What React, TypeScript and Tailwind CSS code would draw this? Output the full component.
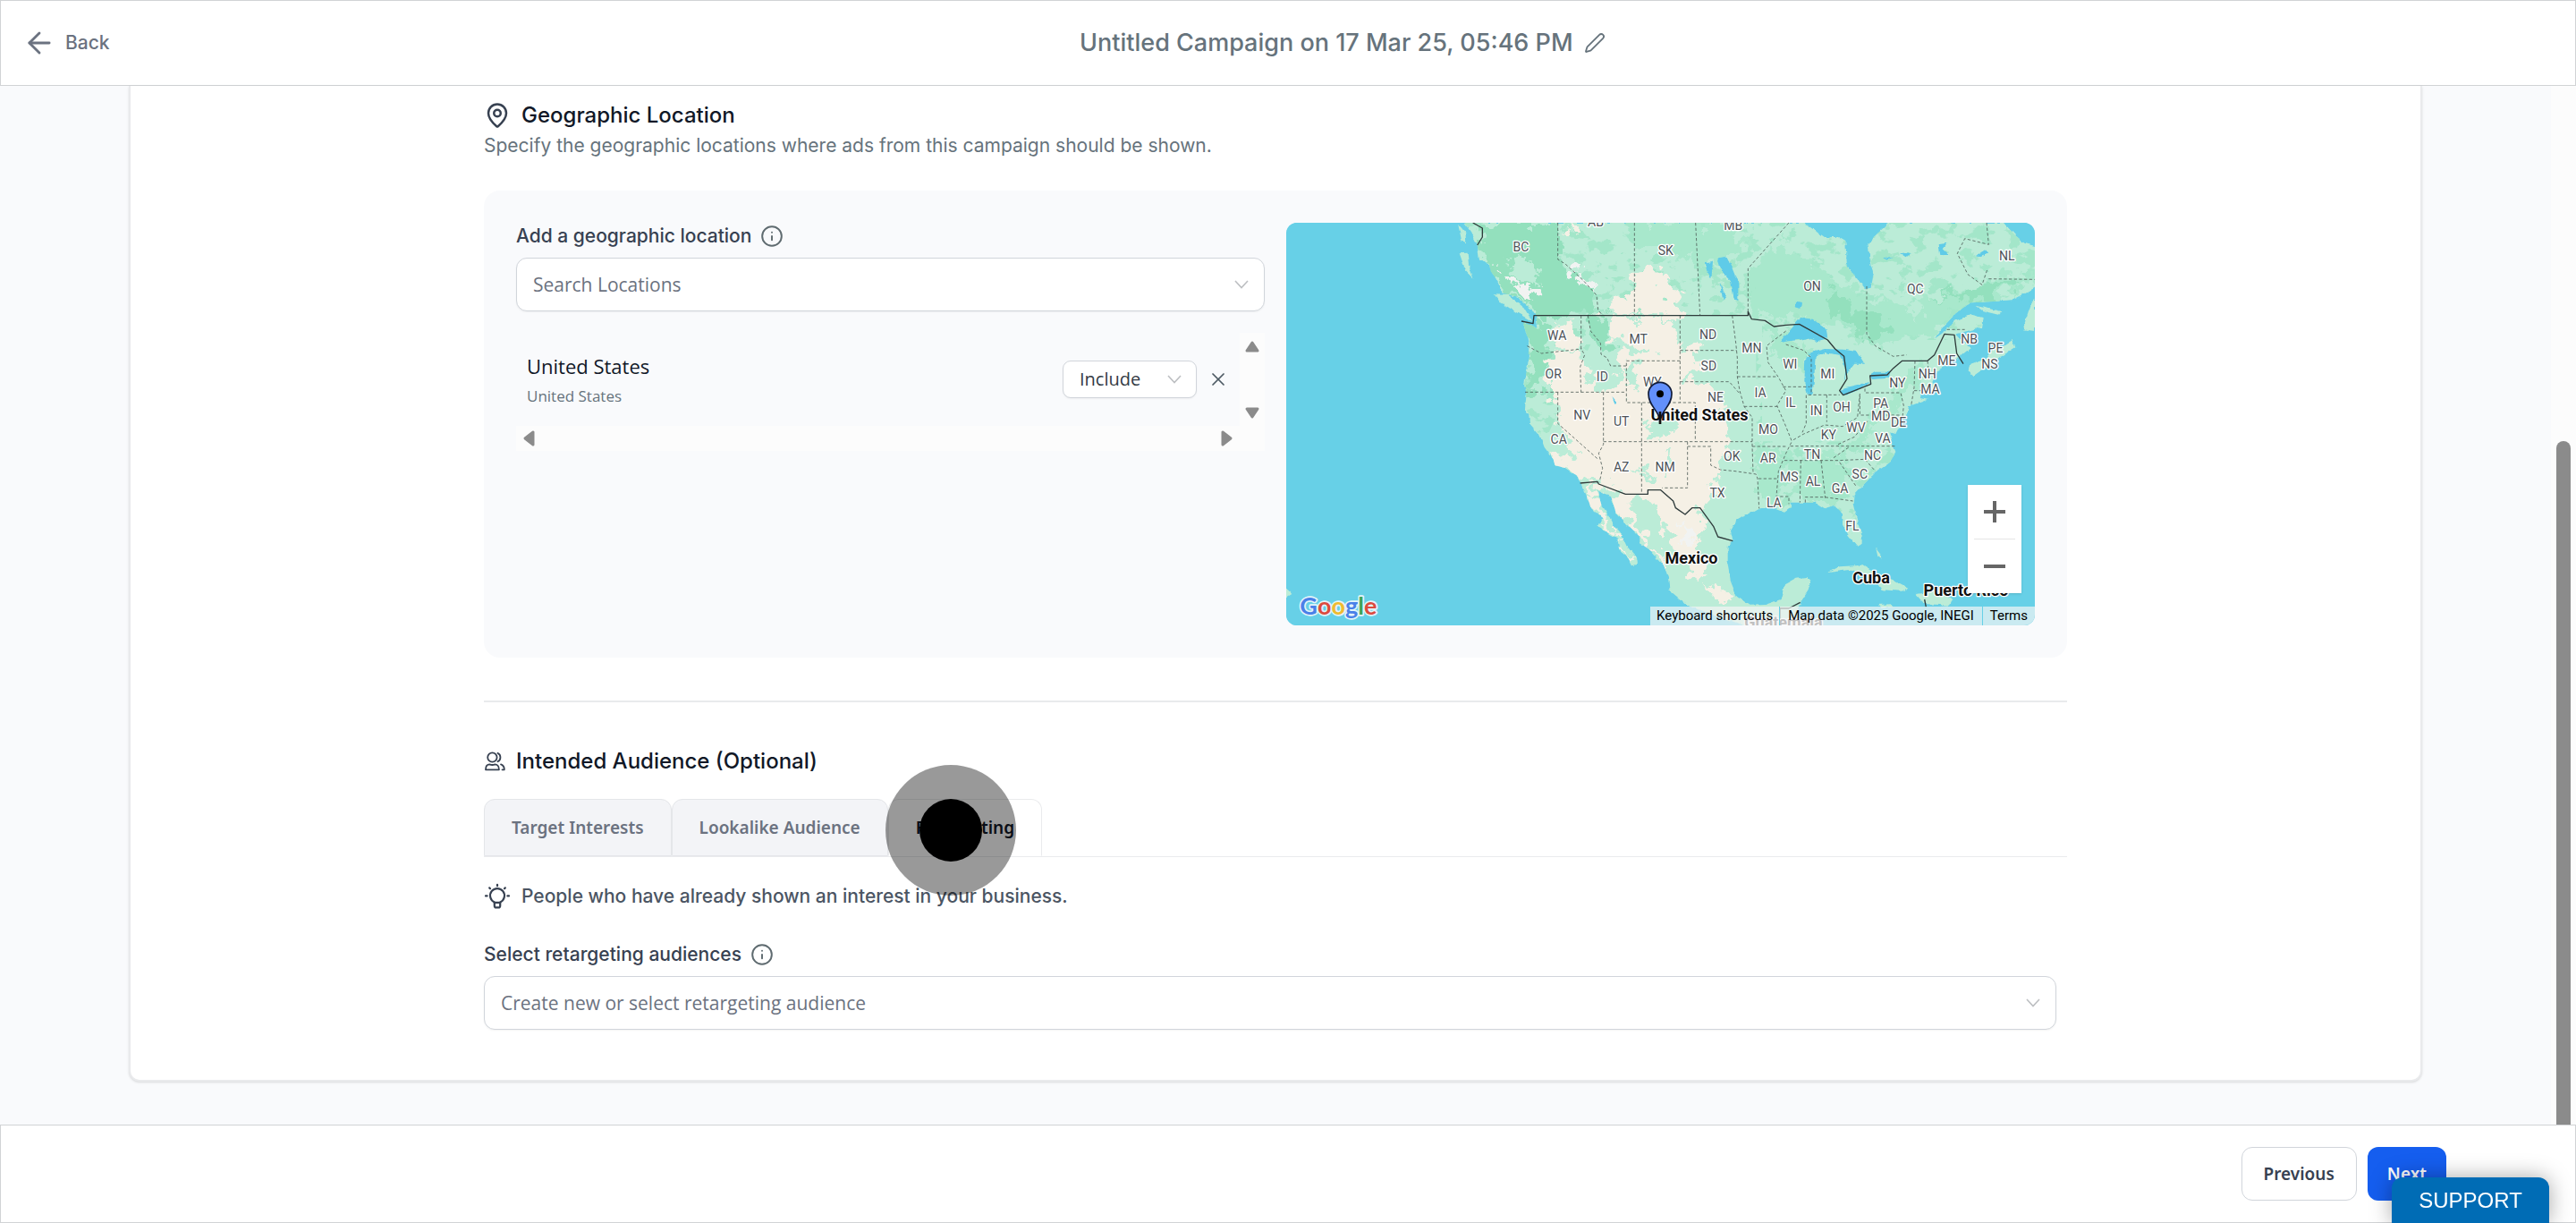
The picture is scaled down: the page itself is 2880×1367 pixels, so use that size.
import React from 'react'
import { ArrowLeft, Info, MapPin, X } from 'lucide-react'

const LAND =
  'M620 27L645 60 665 100 672 152 705 165 710 190 735 225 745 262 800 275 850 320 862 340 868 385 850 372 818 362 830 400 838 440 835 500 822 570 830 600 825 650 838 670 840 700 875 740 890 780 920 820 925 840 960 850 1000 875 1015 905 1035 950 1045 980 1090 1020 1066 1042 1110 1070 1135 1085 1140 1120 1165 1140 1185 1177 1203 1172 1200 1150 1165 1110 1150 1075 1120 1040 1100 1000 1080 970 1068 925 1090 935 1113 942 1130 1000 1170 1040 1210 1080 1210 1100 1245 1125 1290 1175 1305 1215 1310 1260 1370 1310 1440 1335 1560 1377H1730L1740 1320 1752 1295 1775 1260 1786 1222 1770 1215 1730 1220 1695 1240 1682 1290 1630 1308 1580 1310 1535 1280 1515 1230 1505 1170 1505 1110 1522 1095 1515 1060 1535 1025 1570 1005 1605 985 1660 985 1695 998 1720 980 1710 965 1760 965 1800 965 1830 985 1860 975 1890 1000 1892 1040 1910 1075 1940 1112 1955 1105 1955 1075 1940 1030 1925 970 1928 940 1960 905 2000 865 2050 830 2068 795 2060 775 2050 730 2068 735 2085 700 2110 665 2115 643 2175 620 2150 615 2165 590 2185 600 2213 590 2190 560 2210 520 2260 490 2290 470 2318 448 2300 430 2270 400 2355 378 2360 345 2320 335 2270 355 2235 390 2200 415 2215 390 2270 330 2320 295 2410 290 2460 285 2535 245V105L2500 95 2470 70 2430 27H2045L2000 70 1975 95 1982 150 1995 190 1985 245 1965 250 1940 215 1905 175 1900 90 1875 75 1830 75 1760 27Z'

const ISLANDS = [
  'M600 30L625 60 628 95 612 85Z',
  'M605 130L632 128 636 170 652 212 625 185Z',
  'M722 268L770 270 820 310 850 358 800 330 740 292Z',
  'M2535 285L2522 300 2495 385 2535 390Z',
  'M2335 305L2425 325 2415 335 2360 322Z',
  'M2320 500L2375 480 2400 445 2430 440 2460 420 2470 445 2400 490 2330 540 2315 525Z',
  'M1840 1200L1880 1180 1955 1175 2005 1205 2060 1225 2110 1250 2090 1262 2025 1258 1995 1220 1920 1190Z',
  'M2135 1272L2210 1262 2260 1290 2250 1310 2165 1305Z',
  'M2002 1120L2018 1140 2020 1155 2008 1145Z',
  'M2010 1305L2050 1303 2060 1312 2020 1316Z',
  'M24 1255L40 1272 24 1282Z',
]

const DARK_GREEN = [
  'M660 27H935L940 150 1060 270 1080 338H860L800 280 735 225 700 160Z',
  'M822 365L900 345 905 450 880 590H830L838 500Z',
  'M1036 340L1090 345 1125 440 1080 470 1040 400Z',
  'M722 268L770 270 820 310 850 358 800 330Z',
  'M1840 240L1960 330 2050 380 1990 440 1920 370 1850 340Z',
  'M2200 280L2360 240 2470 210 2480 230 2350 280Z',
]

const MID_GREEN = [
  'M1192 27H1500L1570 100 1450 170 1300 120 1200 110Z',
  'M1575 180L1690 90 1770 150 1900 240 2000 280 2100 300 2150 400 2080 420 1990 440 1900 380 1740 340 1640 350 1580 320Z',
  'M1140 600L1180 610 1160 700 1130 750 1100 750 1150 690Z',
  'M1900 770L1990 690 2130 510 2180 500 2130 590 2050 660 1960 780 1880 830 1830 810Z',
  'M1590 780L1680 780 1690 960 1620 960Z',
  'M1700 820H1850L1900 900 1850 960 1750 960Z',
  'M2150 290L2330 250 2450 190 2530 200 2420 280 2260 320 2190 410 2130 400Z',
  'M1640 340L1720 420 1780 440 1740 520 1660 470Z',
]

const DRY = [
  'M1195 195L1260 165 1275 225 1330 250 1355 300 1340 337H1095L1108 285 1140 270 1195 255Z',
  'M1110 345H1310L1345 400 1350 455 1415 458 1410 510 1350 545 1355 562 1450 565 1488 620 1508 720 1495 800 1478 860 1450 930 1400 990 1420 1060 1400 1120 1430 1210 1395 1230 1370 1160 1320 1110 1290 1175 1245 1125 1210 1090 1130 1000 1113 942 1162 937 1075 905 1010 900 980 860 925 835 905 790 1000 820 970 760 940 700 915 620 930 570 895 540 895 480 960 460 1020 452 1040 560 1110 600 1165 520 1130 490 1160 440 1120 400Z',
  'M935 365L990 385 1010 450 925 452 905 430Z',
  'M1015 905L1035 950 1045 980 1090 1020 1066 1042 1110 1070 1135 1085 1140 1120 1165 1140 1185 1177 1203 1172 1150 1100 1090 1000 1060 925Z',
  'M960 35L1020 30 1015 70 975 65Z',
  'M1440 1250L1500 1260 1510 1295 1470 1300Z',
]

const GREEN_ON_DRY = [
  'M1232 690L1262 665 1310 650 1325 690 1310 745 1240 755Z',
  'M1185 960L1240 955 1285 1040 1320 1120 1300 1160 1230 1090 1200 1030Z',
  'M1180 850L1250 870 1240 885 1190 870Z',
  'M1130 430L1200 440 1260 455 1180 470Z',
  'M1170 495L1200 500 1190 560 1170 590Z',
  'M770 160L830 145 870 190 860 235 790 215Z',
  'M1290 790L1310 800 1300 890 1290 870Z',
]

const LAKES = [
  'M1680 430L1720 380 1750 345 1790 350 1835 385 1840 415 1800 425 1770 415 1740 420 1700 425Z',
  'M1765 480L1800 465 1798 490 1795 545 1790 600 1772 602 1762 560Z',
  'M1775 465L1830 450 1895 452 1940 460 1965 500 1930 500 1905 530 1895 560 1900 520 1880 470 1830 462 1790 485Z',
  'M1880 590L1900 580 1985 560 1950 585 1895 607Z',
  'M1980 540L2000 527 2050 527 2045 548 1990 552Z',
  'M1470 145L1500 140 1520 180 1540 230 1540 285 1525 280 1515 220 1485 190Z',
  'M1430 160L1455 155 1450 215 1440 200Z',
  'M1478 230L1500 270 1490 290Z',
  'M1735 290L1755 295 1750 318 1730 312Z',
  'M1117 612L1134 632 1126 635Z',
  'M2210 100L2240 95 2225 115 2245 135 2215 135Z',
  'M2335 140L2370 115 2380 130 2345 145Z',
  'M2025 145L2060 140 2040 152Z',
  'M2085 132L2120 130 2105 145Z',
]

const SNOW = [
  'M775 215L800 225 850 250 858 290 820 280 790 255Z',
  'M985 180L1010 190 1060 240 1070 275 1040 250 1000 225Z',
  'M735 175L752 178 748 190 738 188Z',
  'M870 225L885 250 880 250Z',
  'M1355 1040L1385 1060 1395 1110 1370 1100 1345 1085Z',
]

const PROVINCES =
  'M935 27V150L960 165 1020 220 1065 270 1070 320 1085 337M1192 27V337M1397 27L1412 337M1573 325V180L1710 27M1971 240V400L2000 440 2060 475 2105 470M2373 27L2380 100 2300 80 2275 130 2310 200 2358 235 2375 185M2380 215L2535 217M832 440L880 465 970 455 1015 450M1013 338V450L1025 470 1010 510 1013 595M1036 338L1045 390 1078 430 1080 468 1100 480 1112 507H1165M1345 490H1165V630H1396V761M825 595H1165M935 595V700L1070 820M1088 595V770L1072 800 1085 850 1075 895M1216 630V937M1088 761H1587M1345 338V630M1370 761V916H1285M1370 777H1448V840L1480 855 1530 860 1600 870 1605 885 1610 985M1345 455H1535M1520 338L1532 430 1537 480V543L1545 590 1560 643 1587 680V778L1590 865M1345 560H1510L1545 600M1537 543H1672M1560 643H1672M1587 777H1700M1608 885H1675M1700 390L1635 440 1640 495 1675 545 1700 590 1670 640 1700 710 1720 760 1700 800 1675 860 1668 945H1710V970M1690 577H1780M1768 605V700L1755 730M1775 604H1880M1837 604V695M1725 755L1760 735 1830 705 1890 710 1940 680 1948 600V672H2085M1965 583V597H2085L2095 640 2090 690M1715 776H2065M1695 824H1875L1965 820 2000 860M1750 824L1747 965M1818 824L1832 950M1765 965V947H1830L1925 960M1880 830L1935 910M1860 815L1915 777M1875 770L1930 745 1975 690M2133 490L2130 580 2120 640M2175 490L2180 540M2130 590H2165M1700 435L1760 455 1785 480V600M2240 385H2300'

const BORDERS =
  'M650 27L682 45V75L665 102M813 357L852 365 855 338H1573V325L1585 350 1630 355 1660 375 1700 370 1745 367 1840 420 1865 450 1895 475 1905 550 1880 590 1892 605 1985 568 1982 540 2040 537 2060 515 2090 490H2175L2198 470 2232 400 2265 403 2273 465 2295 500M1010 900L1068 895 1072 903 1162 937H1237V923H1280L1322 960 1330 983 1362 1005 1385 983H1412L1457 1045 1472 1080 1522 1094M1680 1377V1320H1710L1748 1300M2165 1290L2170 1315'

const STATES: [string, number, number][] = [
  ['BC', 811, 109], ['AB', 1062, 25], ['SK', 1297, 120], ['MB', 1523, 37], ['ON', 1788, 239],
  ['QC', 2134, 248], ['NL', 2441, 138], ['WA', 932, 405], ['MT', 1205, 418], ['ND', 1439, 401],
  ['MN', 1585, 446], ['SD', 1441, 507], ['WI', 1714, 500], ['MI', 1840, 534], ['OR', 920, 534],
  ['ID', 1084, 543], ['WY', 1252, 560], ['NE', 1464, 612], ['IA', 1614, 598], ['IL', 1716, 630],
  ['IN', 1802, 658], ['OH', 1887, 644], ['PA', 2018, 634], ['NY', 2074, 563], ['NH', 2174, 533],
  ['MA', 2184, 584], ['ME', 2239, 488], ['NB', 2315, 418], ['PE', 2403, 446], ['NS', 2383, 500],
  ['MD', 2018, 676], ['DE', 2078, 696], ['WV', 1935, 713], ['VA', 2025, 749], ['KY', 1843, 738],
  ['MO', 1641, 721], ['NV', 1016, 671], ['UT', 1148, 694], ['CA', 938, 754], ['AZ', 1148, 847],
  ['NM', 1295, 847], ['OK', 1519, 809], ['AR', 1640, 815], ['TN', 1788, 804], ['NC', 1991, 806],
  ['SC', 1948, 869], ['MS', 1711, 878], ['AL', 1791, 894], ['GA', 1881, 917], ['TX', 1470, 932],
  ['LA', 1660, 966], ['FL', 1923, 1043],
]

const COUNTRIES: [string, number, number][] = [
  ['United States', 1410, 672],
  ['Mexico', 1383, 1151],
  ['Cuba', 1986, 1217],
  ['Puerto Rico', 2304, 1261],
]

function MapDrawing() {
  return (
    <svg
      className="absolute inset-0 h-full w-full"
      viewBox="24 27 2511 1350"
      preserveAspectRatio="xMidYMid slice"
    >
      <defs>
        <clipPath id="land">
          <path d={LAND} />
        </clipPath>
        <filter id="coast" x="0" y="0" width="1" height="1">
          <feTurbulence type="fractalNoise" baseFrequency="0.04" numOctaves="3" seed="3" />
          <feDisplacementMap in="SourceGraphic" scale="14" xChannelSelector="R" yChannelSelector="G" />
        </filter>
        <filter id="rough" x="-0.1" y="-0.1" width="1.2" height="1.2">
          <feTurbulence type="fractalNoise" baseFrequency="0.022" numOctaves="4" seed="8" />
          <feDisplacementMap in="SourceGraphic" scale="110" xChannelSelector="R" yChannelSelector="G" />
        </filter>
        <filter id="speckle" x="0" y="0" width="1" height="1" colorInterpolationFilters="sRGB">
          <feTurbulence type="fractalNoise" baseFrequency="0.018 0.024" numOctaves="5" seed="11" />
          <feColorMatrix values="0 0 0 0 0.64  0 0 0 0 0.9  0 0 0 0 0.79  20 0 0 0 -11.2" />
          <feComposite in2="SourceGraphic" operator="in" />
        </filter>
      </defs>
      <rect x="0" y="0" width="2600" height="1400" fill="#67d0e7" />
      <g fill="#bbecd7" filter="url(#coast)">
        <path d={LAND} />
        {ISLANDS.map((d) => (
          <path key={d} d={d} />
        ))}
      </g>
      <g clipPath="url(#land)">
        <path d="M600 27H2535V420H1600V760H2150L1900 1100H1620V340H1090L900 740H800V300Z" filter="url(#speckle)" />
        <g filter="url(#rough)">
          <g fill="#a8e8cc">
            {MID_GREEN.map((d) => (
              <path key={d} d={d} />
            ))}
          </g>
          <g fill="#93e0bd">
            {DARK_GREEN.map((d) => (
              <path key={d} d={d} />
            ))}
          </g>
          <g fill="#f5f0e5">
            {DRY.map((d) => (
              <path key={d} d={d} />
            ))}
          </g>
          <g fill="#bbecd7">
            {GREEN_ON_DRY.map((d) => (
              <path key={d} d={d} />
            ))}
          </g>
          <g fill="#f1f3f2">
            {SNOW.map((d) => (
              <path key={d} d={d} />
            ))}
          </g>
        </g>
      </g>
      <g fill="#5ecbe8" filter="url(#coast)">
        {LAKES.map((d) => (
          <path key={d} d={d} />
        ))}
      </g>
      <path d={PROVINCES} fill="none" stroke="#4c5a55" strokeWidth="3" strokeDasharray="10 7" opacity="0.8" />
      <path d={BORDERS} fill="none" stroke="#2f3b3b" strokeWidth="4" strokeLinejoin="round" />
      <g
        className="font-[Roboto]"
        fontSize="42"
        fill="#4d5257"
        stroke="#fff"
        strokeWidth="8"
        strokeLinejoin="round"
        paintOrder="stroke"
        textAnchor="middle"
      >
        {STATES.map(([name, x, y]) => (
          <text key={name} x={x} y={y + 15}>
            {name}
          </text>
        ))}
      </g>
      <g
        className="font-[Roboto] font-bold"
        fontSize="54"
        fill="#111"
        stroke="#fff"
        strokeWidth="8"
        strokeLinejoin="round"
        paintOrder="stroke"
        textAnchor="middle"
      >
        {COUNTRIES.map(([name, x, y]) => (
          <text key={name} x={x} y={y + 18}>
            {name}
          </text>
        ))}
        <text x="1692" y="1386" fill="#444">
          Guatemala
        </text>
      </g>
      <path
        d="M1278 700C1278 655 1239 645 1239 601A39 39 0 0 1 1317 601C1317 645 1278 655 1278 700Z"
        fill="#6390fb"
        stroke="#111b38"
        strokeWidth="5"
      />
      <path d="M1278 660V702" stroke="#111" strokeWidth="8" />
      <circle cx="1278" cy="601" r="12" fill="#000" />
      <text
        className="font-[Lato] font-bold"
        x="70"
        y="1340"
        fontSize="81"
        stroke="#e4f4fa"
        strokeWidth="10"
        strokeLinejoin="round"
        paintOrder="stroke"
      >
        <tspan fill="#4a80e8">G</tspan>
        <tspan fill="#dc4b3e">o</tspan>
        <tspan fill="#efbb30">o</tspan>
        <tspan fill="#4a80e8">g</tspan>
        <tspan fill="#3ca458">l</tspan>
        <tspan fill="#dc4b3e">e</tspan>
      </text>
    </svg>
  )
}

function Map() {
  return (
    <div className="relative h-[450px] overflow-hidden rounded-xl bg-[#67d0e7]">
      <MapDrawing />
      <div className="absolute right-[15px] bottom-9 flex w-[60px] flex-col items-center bg-white shadow">
        <button aria-label="Zoom in" className="flex h-[60px] w-full items-center justify-center">
          <svg className="size-6" viewBox="0 0 24 24" stroke="#666" strokeWidth="4">
            <path d="M12 0V24M0 12H24" />
          </svg>
        </button>
        <div className="h-px w-[46px] bg-[#e6e6e6]" />
        <button aria-label="Zoom out" className="flex h-[60px] w-full items-center justify-center">
          <svg className="size-6" viewBox="0 0 24 24" stroke="#666" strokeWidth="4">
            <path d="M0 12H24" />
          </svg>
        </button>
      </div>
      <div className="absolute right-0 bottom-0 flex h-[21px] items-center bg-[#f5f5f5]/70 font-[Roboto] text-[15px] leading-[21px] text-black">
        <button className="px-[7px]">Keyboard shortcuts</button>
        <span className="border-l border-[#67d0e7] px-[9px]">Map data ©2025 Google, INEGI</span>
        <a href="#terms" className="border-l border-[#67d0e7] px-2">
          Terms
        </a>
      </div>
    </div>
  )
}

function Chevron({ className }: { className: string }) {
  return (
    <svg
      className={`pointer-events-none absolute top-1/2 h-[10px] w-4 -translate-y-1/2 ${className}`}
      viewBox="0 0 16 10"
      fill="none"
      stroke="#bdbfc2"
      strokeWidth="1.6"
    >
      <path d="M1 1l7 7.6L15 1" />
    </svg>
  )
}

function ScrollArrow({ d }: { d: string }) {
  return (
    <svg className="size-[28px]" viewBox="0 0 28 28" fill="#8b8b8b" stroke="#8b8b8b" strokeWidth="3" strokeLinejoin="round">
      <path d={d} />
    </svg>
  )
}

function LocationList() {
  return (
    <div className="mt-6 grid grid-cols-[1fr_28px]">
      <div className="flex h-[104px] items-center pr-3 pl-3">
        <div className="flex-1 pt-1 font-['Open_Sans']">
          <div className="text-[22px] leading-[34px] text-[#111827]">United States</div>
          <div className="text-[17px] leading-[34px] text-[#66737c]">United States</div>
        </div>
        <div className="relative w-[150px]">
          <select
            aria-label="Include or exclude location"
            className="h-[42px] w-full appearance-none rounded-[9px] border border-[#d1d5db] bg-white pr-10 pl-[18px] font-['Open_Sans'] text-[20px] text-[#333b45] shadow-xs"
          >
            <option>Include</option>
            <option>Exclude</option>
          </select>
          <Chevron className="right-[17px]" />
        </div>
        <button aria-label="Remove United States" className="ml-3 flex size-6 items-center justify-center text-[#4d5a63]">
          <X className="size-6" strokeWidth={1.7} />
        </button>
      </div>
      <div className="flex flex-col justify-between bg-[#fcfcfc]">
        <ScrollArrow d="M14 11L20 20H8Z" />
        <ScrollArrow d="M14 18L20 9H8Z" />
      </div>
      <div className="flex justify-between bg-[#fcfcfc]">
        <ScrollArrow d="M10 14L19 7V21Z" />
        <ScrollArrow d="M18 14L9 7V21Z" />
      </div>
      <div className="bg-[#fcfcfc]" />
    </div>
  )
}

const tabBase = "h-16 rounded-t-xl border px-[30px] font-['Noto_Sans'] text-[19px] font-semibold"

export default function App() {
  return (
    <div className="flex min-h-screen flex-col bg-[#f9fafc] font-[Inter]">
      <header className="flex h-24 items-center border border-[#d1d3d5] bg-white pl-6">
        <button className="flex items-center gap-[10px] text-[21px] font-medium text-[#6b7280]">
          <ArrowLeft className="size-[38px]" strokeWidth={1.8} />
          Back
        </button>
        <div className="flex flex-1 items-center justify-center gap-3">
          <h1 className="text-[27px] font-medium text-[#66737c]">Untitled Campaign on 17 Mar 25, 05:46 PM</h1>
          <button aria-label="Rename campaign">
            <svg className="size-6" viewBox="0 0 24 24" fill="none" stroke="#66737c" strokeWidth="1.8" strokeLinejoin="round">
              <path d="M21.174 6.812a1 1 0 0 0-3.986-3.987L3.842 16.174a2 2 0 0 0-.5.83l-1.321 4.352a.5.5 0 0 0 .623.622l4.353-1.32a2 2 0 0 0 .83-.497z" />
            </svg>
          </button>
        </div>
      </header>

      <div className="flex flex-1">
        <main className="flex-1 px-36 pb-12">
          <div className="rounded-b-xl border-x-2 border-b-2 border-[#e9eaec] bg-white pt-[13px] pb-14 shadow-sm">
            <div className="mx-auto w-full max-w-[1770px]">
              <section>
                <div className="flex h-10 items-center gap-3">
                  <MapPin className="size-[30px] text-[#374151]" strokeWidth={2} />
                  <h2 className="text-[24px] font-medium text-[#111827]">Geographic Location</h2>
                </div>
                <p className="text-[21px] leading-7 text-[#66737c]">
                  Specify the geographic locations where ads from this campaign should be shown.
                </p>

                <div className="mt-9 grid grid-cols-2 gap-6 rounded-[18px] bg-[#f9fafc] p-9">
                  <div>
                    <div className="flex h-[30px] items-center gap-[10px]">
                      <label htmlFor="location" className="text-[21px] font-medium text-[#374151]">
                        Add a geographic location
                      </label>
                      <Info className="size-[26px] text-[#5f6b70]" strokeWidth={1.8} />
                    </div>
                    <div className="relative mt-[9px]">
                      <input
                        id="location"
                        placeholder="Search Locations"
                        className="h-[60px] w-full rounded-xl border border-[#d1d5db] bg-white px-[18px] font-['Open_Sans'] text-[21px] shadow-xs placeholder:text-[#6b7280]"
                      />
                      <Chevron className="right-[18px]" />
                    </div>
                    <LocationList />
                  </div>
                  <Map />
                </div>
              </section>

              <hr className="mt-12 border-t-2 border-[#e9ebec]" />

              <section className="mt-12">
                <div className="flex h-9 items-center gap-3">
                  <svg
                    className="size-6"
                    viewBox="0 0 24 24"
                    fill="none"
                    stroke="#374151"
                    strokeWidth="1.8"
                    strokeLinecap="round"
                    strokeLinejoin="round"
                  >
                    <circle cx="9.4" cy="7.5" r="5.2" />
                    <path d="M2 21.3C2 17.5 4 15.4 6.4 15.4C8.4 16.2 10.4 16.2 12.4 15.4C14.8 15.4 16.9 17.5 16.9 21.3Z" />
                    <path d="M15.5 2.8C19.4 4.4 19.4 10.6 15.5 12.2" />
                    <path d="M19 15.4C21.6 16.4 22.9 18.4 22.8 21.3H20.5" />
                  </svg>
                  <h2 className="text-[24px] font-medium text-[#111827]">Intended Audience (Optional)</h2>
                </div>

                <div role="tablist" className="mt-6 flex border-b border-[#eaebed]">
                  <button role="tab" className={`${tabBase} -mb-px border-[#e4e6e9] bg-[#f3f4f7] text-[#6b7280]`}>
                    Target Interests
                  </button>
                  <button role="tab" className={`${tabBase} -mb-px border-[#e4e6e9] bg-[#f3f4f7] text-[#6b7280]`}>
                    Lookalike Audience
                  </button>
                  <div className="relative">
                    <button role="tab" aria-selected="true" className={`${tabBase} border-[#eaebed] border-b-white bg-white text-[#111827]`}>
                      Retargeting
                    </button>
                    <div className="pointer-events-none absolute -top-[38px] -left-[3px] z-10 flex size-[146px] items-center justify-center rounded-full bg-black/40">
                      <div className="size-[70px] rounded-full bg-black" />
                    </div>
                  </div>
                </div>

                <div className="mt-[26px] flex h-9 items-center gap-3">
                  <svg
                    className="size-[30px]"
                    viewBox="0 0 30 30"
                    fill="none"
                    stroke="#374151"
                    strokeWidth="2.2"
                    strokeLinecap="round"
                    strokeLinejoin="round"
                  >
                    <path d="M11.8 22.4V21.4A8 8 0 1 1 18.2 21.4V22.4" />
                    <path d="M11.8 21.8H18.2V25.4A2 2 0 0 1 16.2 27.4H13.8A2 2 0 0 1 11.8 25.4Z" />
                    <path d="M15 1.8V3.2M6.2 5.4L7 6.2M23.8 5.4L23 6.2M2 14.4H3.6M26.4 14.4H28" />
                  </svg>
                  <p className="text-[21px] font-medium text-[#4b5563]">
                    People who have already shown an interest in your business.
                  </p>
                </div>

                <div className="mt-8 flex h-[30px] items-center gap-[10px]">
                  <label htmlFor="retargeting" className="text-[21px] font-medium text-[#374151]">
                    Select retargeting audiences
                  </label>
                  <Info className="size-[26px] text-[#5f6b70]" strokeWidth={1.8} />
                </div>
                <div className="relative mt-[9px] mr-3">
                  <input
                    id="retargeting"
                    placeholder="Create new or select retargeting audience"
                    className="h-[60px] w-full rounded-xl border border-[#d1d5db] bg-white px-[18px] font-['Open_Sans'] text-[21px] shadow-xs placeholder:text-[#6b7280]"
                  />
                  <Chevron className="right-[18px]" />
                </div>
              </section>
            </div>
          </div>
        </main>
        <div className="flex w-7 flex-col items-center bg-[#fcfcfc]">
          <div className="mt-[397px] w-4 flex-1 rounded-t-full bg-[#8b8b8b]" />
        </div>
      </div>

      <footer className="flex h-[110px] items-center justify-end gap-3 border border-[#d1d3d5] bg-white px-36 font-['Noto_Sans'] text-[19px] font-semibold">
        <button className="h-[60px] rounded-xl border border-[#d1d5db] px-6 text-[#374151]">Previous</button>
        <button className="h-[60px] rounded-xl bg-[#155eef] px-[22px] text-white">Next</button>
      </footer>

      <button className="fixed right-[30px] bottom-0 h-[51px] w-44 rounded-t-xl bg-[#006cb5] font-['Liberation_Sans'] text-[24px] text-white shadow-[0_0_24px_rgba(0,0,0,0.35)]">
        SUPPORT
      </button>
    </div>
  )
}
